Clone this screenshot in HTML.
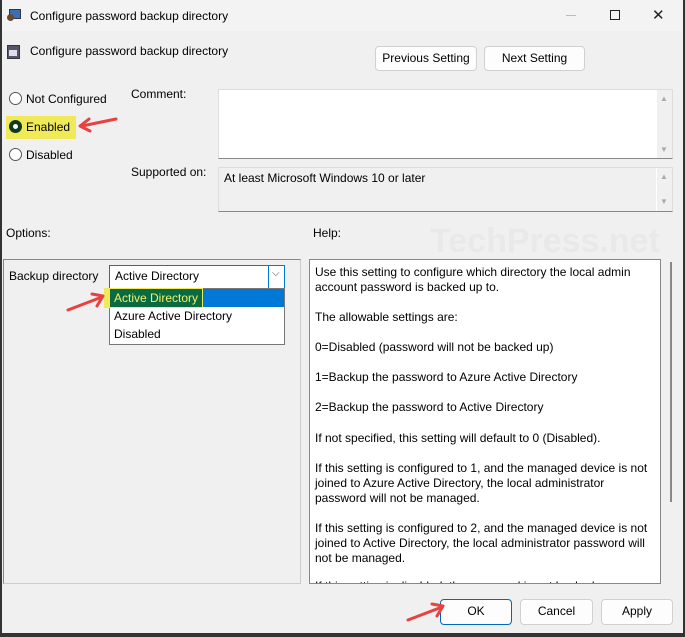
<!DOCTYPE html>
<html><head><style>
*{margin:0;padding:0;box-sizing:border-box}
body{width:685px;height:637px;background:#f0f0f0;font-family:"Liberation Sans",sans-serif;font-size:12px;color:#000;position:relative;overflow:hidden}
.a{position:absolute;white-space:nowrap}
.btn{position:absolute;background:#fdfdfd;border:1px solid #d0d0d0;border-radius:4px;text-align:center;line-height:23px;font-size:12px}
.radio{position:absolute;width:13px;height:13px;border:1px solid #555;border-radius:50%;background:#fff}
.help div{position:absolute;left:5px;white-space:nowrap}
</style></head><body>
<div class="a" style="left:0;top:0;width:685px;height:31px;background:#f3f3f3"></div>
<div class="a" style="left:0;top:0;width:2px;height:637px;background:#333"></div>
<div class="a" style="left:683px;top:0;width:2px;height:637px;background:#333"></div>
<div class="a" style="left:0;top:633px;width:685px;height:4px;background:#333"></div>
<!-- title icon -->
<div class="a" style="left:9px;top:9px;width:12px;height:10px;background:#3a6fb0;border:1px solid #334"></div>
<div class="a" style="left:7px;top:14px;width:7px;height:7px;background:#6b4a2a;border-radius:50%"></div>
<div class="a" style="left:30px;top:9px;font-size:12px">Configure password backup directory</div>
<div class="a" style="left:566px;top:15px;width:10px;height:1px;background:#bbb"></div>
<div class="a" style="left:610px;top:10px;width:10px;height:10px;border:1px solid #222"></div>
<div class="a" style="left:652px;top:6px;font-size:15px;color:#222">✕</div>
<!-- header -->
<div class="a" style="left:7px;top:45px;width:13px;height:14px;background:#556;border:1px solid #334"></div>
<div class="a" style="left:9px;top:50px;width:8px;height:6px;background:#dde"></div>
<div class="a" style="left:30px;top:44px">Configure password backup directory</div>
<div class="btn" style="left:375px;top:46px;width:102px;height:25px">Previous Setting</div>
<div class="btn" style="left:484px;top:46px;width:101px;height:25px">Next Setting</div>
<!-- radios -->
<div class="a" style="left:6px;top:116px;width:70px;height:23px;background:#f0e95a"></div>
<div class="radio" style="left:9px;top:92px"></div>
<div class="a" style="left:26px;top:92px">Not Configured</div>
<div class="radio" style="left:9px;top:120px;border:4px solid #0e3a20;background:#fff"></div>
<div class="a" style="left:26px;top:120px">Enabled</div>
<div class="radio" style="left:9px;top:148px"></div>
<div class="a" style="left:26px;top:148px">Disabled</div>
<svg class="a" style="left:76px;top:114px" width="42" height="20"><path d="M40 5 L6 12" stroke="#e8413f" stroke-width="3" stroke-linecap="round"/><path d="M13 5 L4 12 L14 17" fill="none" stroke="#e8413f" stroke-width="3" stroke-linecap="round" stroke-linejoin="round"/></svg>
<div class="a" style="left:131px;top:87px">Comment:</div>
<div class="a" style="left:131px;top:165px">Supported on:</div>
<div class="a" style="left:218px;top:89px;width:455px;height:70px;background:#fff;border:1px solid #ddd;border-bottom-color:#888"></div>
<div class="a" style="left:657px;top:90px;width:15px;height:68px;background:#f0f0f0"></div>
<div class="a" style="left:660px;top:94px;font-size:8px;color:#aaa">▲</div>
<div class="a" style="left:660px;top:145px;font-size:8px;color:#aaa">▼</div>
<div class="a" style="left:218px;top:167px;width:455px;height:45px;background:#f0f0f0;border:1px solid #ddd;border-bottom-color:#888"></div>
<div class="a" style="left:224px;top:171px">At least Microsoft Windows 10 or later</div>
<div class="a" style="left:656px;top:168px;width:1px;height:43px;background:#fff"></div>
<div class="a" style="left:660px;top:172px;font-size:8px;color:#aaa">▲</div>
<div class="a" style="left:660px;top:197px;font-size:8px;color:#aaa">▼</div>
<div class="a" style="left:6px;top:226px">Options:</div>
<div class="a" style="left:313px;top:226px">Help:</div>
<div class="a" style="left:430px;top:222px;font-size:34px;font-weight:bold;color:#e9e9e9">TechPress.net</div>
<!-- options pane -->
<div class="a" style="left:3px;top:259px;width:298px;height:325px;border:1px solid #888;border-right-color:#ccc;border-bottom-color:#ccc"></div>
<div class="a" style="left:9px;top:269px">Backup directory</div>
<div class="a" style="left:109px;top:265px;width:176px;height:24px;background:#fff;border:1px solid #0078d7"></div>
<div class="a" style="left:115px;top:269px">Active Directory</div>
<div class="a" style="left:268px;top:266px;width:1px;height:22px;background:#0078d7"></div>
<div class="a" style="left:272px;top:268px;font-size:10px;color:#444">⌵</div>
<div class="a" style="left:109px;top:288px;width:176px;height:57px;background:#fff;border:1px solid #777"></div>
<div class="a" style="left:110px;top:289px;width:174px;height:18px;background:#0078d7"></div>
<div class="a" style="left:104px;top:288px;width:99px;height:20px;background:#f0e95a"></div>
<div class="a" style="left:110px;top:289px;width:92px;height:18px;background:#0a6b40"></div>
<div class="a" style="left:114px;top:291px;color:#f3f06a">Active Directory</div>
<div class="a" style="left:114px;top:309px">Azure Active Directory</div>
<div class="a" style="left:114px;top:327px">Disabled</div>
<svg class="a" style="left:64px;top:290px" width="44" height="24"><path d="M4 20 L38 7" stroke="#e8413f" stroke-width="3" stroke-linecap="round"/><path d="M28 4 L39 6 L33 16" fill="none" stroke="#e8413f" stroke-width="3" stroke-linecap="round" stroke-linejoin="round"/></svg>
<!-- help pane -->
<div class="a help" style="left:309px;top:259px;width:352px;height:325px;background:#fff;border:1px solid #888;overflow:hidden">
<div style="top:5px">Use this setting to configure which directory the local admin</div>
<div style="top:20px">account password is backed up to.</div>
<div style="top:50px">The allowable settings are:</div>
<div style="top:80px">0=Disabled (password will not be backed up)</div>
<div style="top:110px">1=Backup the password to Azure Active Directory</div>
<div style="top:140px">2=Backup the password to Active Directory</div>
<div style="top:171px">If not specified, this setting will default to 0 (Disabled).</div>
<div style="top:201px">If this setting is configured to 1, and the managed device is not</div>
<div style="top:216px">joined to Azure Active Directory, the local administrator</div>
<div style="top:231px">password will not be managed.</div>
<div style="top:261px">If this setting is configured to 2, and the managed device is not</div>
<div style="top:276px">joined to Active Directory, the local administrator password will</div>
<div style="top:291px">not be managed.</div>
<div style="top:319px">If this setting is disabled, the password is not backed up</div>
</div>
<div class="a" style="left:670px;top:262px;width:2px;height:240px;background:#888"></div>
<!-- bottom buttons -->
<div class="btn" style="left:440px;top:599px;width:72px;height:26px;border:1px solid #0067c0">OK</div>
<div class="btn" style="left:520px;top:599px;width:73px;height:26px">Cancel</div>
<div class="btn" style="left:601px;top:599px;width:72px;height:26px">Apply</div>
<svg class="a" style="left:404px;top:600px" width="44" height="24"><path d="M4 20 L38 7" stroke="#e8413f" stroke-width="3" stroke-linecap="round"/><path d="M28 4 L39 6 L33 16" fill="none" stroke="#e8413f" stroke-width="3" stroke-linecap="round" stroke-linejoin="round"/></svg>
</body></html>
